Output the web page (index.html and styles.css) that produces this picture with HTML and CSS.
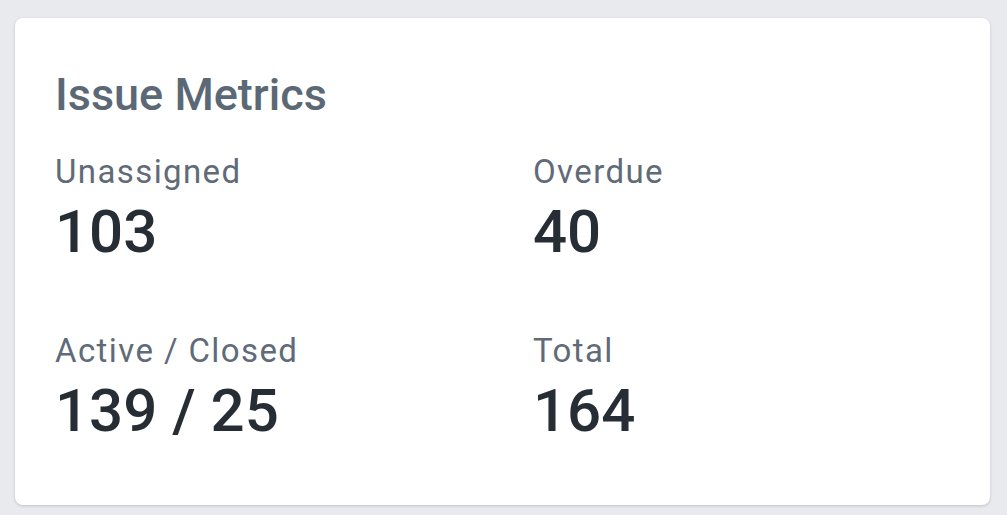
FILE: index.html
```html
<!DOCTYPE html>
<html lang="en">
<head>
<meta charset="utf-8">
<title>Issue Metrics</title>
<link rel="stylesheet" href="styles.css">
</head>
<body>
<section class="card">
  <h2 class="card-title">Issue Metrics</h2>
  <div class="metrics">
    <div class="metric">
      <div class="metric-label">Unassigned</div>
      <div class="metric-value">103</div>
    </div>
    <div class="metric">
      <div class="metric-label">Overdue</div>
      <div class="metric-value">40</div>
    </div>
    <div class="metric">
      <div class="metric-label">Active / Closed</div>
      <div class="metric-value">139 / 25</div>
    </div>
    <div class="metric">
      <div class="metric-label">Total</div>
      <div class="metric-value">164</div>
    </div>
  </div>
</section>
</body>
</html>
```

FILE: styles.css
```css
html, body {
  margin: 0;
  padding: 0;
}
body {
  background: #e9eaee;
  font-family: Roboto, "Noto Sans", Arial, sans-serif;
  padding: 18px 17px 10px 15px;
}
.card {
  box-sizing: border-box;
  width: 975px;
  height: 487px;
  background: #ffffff;
  border-radius: 8px;
  box-shadow: 0 1px 3px rgba(40, 50, 70, 0.22);
  padding: 50px 40px 0 40px;
}
.card-title {
  margin: 0;
  font-size: 45px;
  line-height: 54px;
  font-weight: 500;
  color: #5b6875;
}
.metrics {
  margin-top: 31px;
  display: grid;
  grid-template-columns: 1fr 1fr;
  column-gap: 61px;
  row-gap: 65px;
}
.metric-label {
  font-size: 33px;
  line-height: 38px;
  letter-spacing: 1.4px;
  color: #5f6b78;
}
.metric-value {
  margin-top: 6px;
  font-size: 60px;
  line-height: 70px;
  font-weight: 500;
  color: #272d34;
}
```
